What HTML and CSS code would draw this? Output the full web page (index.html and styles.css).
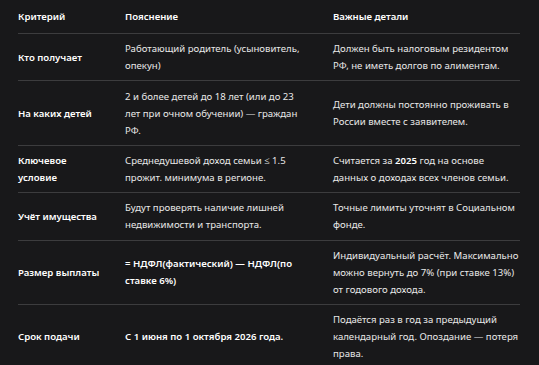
FILE: index.html
```html
<!DOCTYPE html>
<html lang="ru">
<head>
<meta charset="utf-8">
<link rel="stylesheet" href="styles.css">
</head>
<body>
<div class="wrap">
<table class="info">
  <colgroup>
    <col class="c1"><col class="c2"><col class="c3">
  </colgroup>
  <thead>
    <tr><th>Критерий</th><th>Пояснение</th><th>Важные детали</th></tr>
  </thead>
  <tbody>
    <tr>
      <td class="key">Кто получает</td>
      <td>Работающий родитель (усыновитель, опекун)</td>
      <td>Должен быть налоговым резидентом РФ, не иметь долгов по алиментам.</td>
    </tr>
    <tr>
      <td class="key">На каких детей</td>
      <td>2 и более детей до 18 лет (или до 23 лет при очном обучении) — граждан РФ.</td>
      <td>Дети должны постоянно проживать в России вместе с заявителем.</td>
    </tr>
    <tr>
      <td class="key">Ключевое условие</td>
      <td>Среднедушевой доход семьи ≤ 1.5 прожит. минимума в регионе.</td>
      <td>Считается за <b>2025</b> год на основе данных о доходах всех членов семьи.</td>
    </tr>
    <tr>
      <td class="key">Учёт имущества</td>
      <td>Будут проверять наличие лишней недвижимости и транспорта.</td>
      <td>Точные лимиты уточнят в Социальном фонде.</td>
    </tr>
    <tr>
      <td class="key">Размер выплаты</td>
      <td><b>= НДФЛ(фактический) — НДФЛ(по ставке 6%)</b></td>
      <td>Индивидуальный расчёт. Максимально можно вернуть до 7% (при ставке 13%) от годового дохода.</td>
    </tr>
    <tr>
      <td class="key">Срок подачи</td>
      <td><b>С 1 июня по 1 октября 2026 года.</b></td>
      <td>Подаётся раз в год за предыдущий календарный год. Опоздание — потеря права.</td>
    </tr>
  </tbody>
</table>
</div>
</body>
</html>
```
FILE: styles.css
```css
html, body {
  margin: 0;
  padding: 0;
  background: #18181a;
}
body {
  font-family: "Noto Sans", "Open Sans", sans-serif;
  font-size: 9.6px;
  line-height: 17px;
  color: #e8e8e8;
  overflow: hidden;
  height: 365px;
}
.wrap {
  padding: 0 19px 0 18px;
}
.info {
  width: 502px;
  border-collapse: collapse;
  table-layout: fixed;
}
.c1 { width: 107px; }
.c2 { width: 208px; }
.c3 { width: 187px; }
th, td {
  text-align: left;
  vertical-align: middle;
  padding: 6.2px 16px 6.2px 0;
}
th:first-child, td:first-child { padding-right: 22px; }
th:nth-child(2), td:nth-child(2) { padding-right: 26px; }
th:last-child, td:last-child { padding-right: 0; }
th {
  font-weight: 600;
  color: #fff;
  padding-top: 8px;
  padding-bottom: 8px;
}
tbody tr { border-top: 1px solid #3c3c3e; }
.key { font-weight: 600; color: #fff; }
b { font-weight: 600; color: #fff; }
```
